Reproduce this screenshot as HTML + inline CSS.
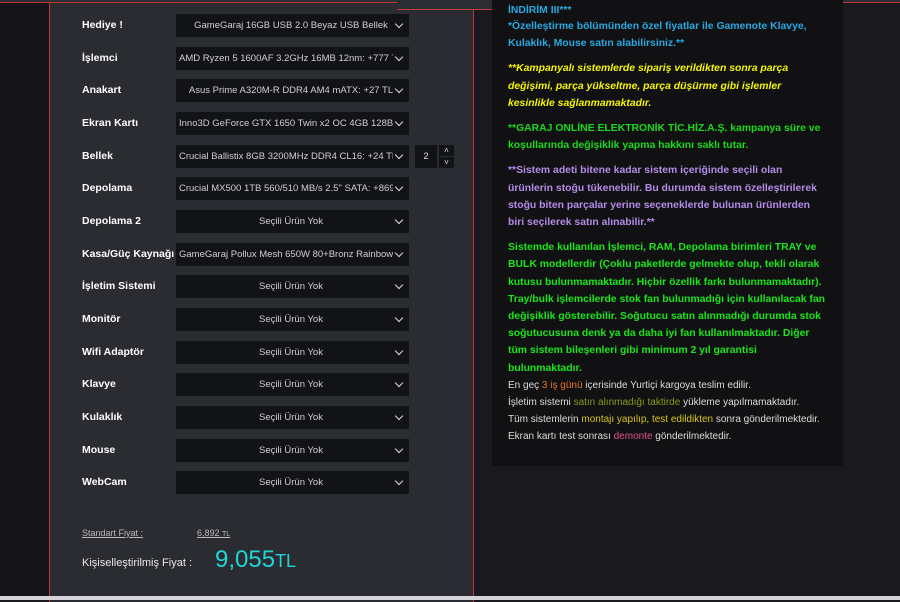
<!DOCTYPE html>
<html><head><meta charset="utf-8"><style>
*{margin:0;padding:0;box-sizing:border-box}
body{width:900px;height:600px;overflow:hidden;background:#1a191e;font-family:"Liberation Sans","DejaVu Sans",sans-serif;position:relative}
.left{position:absolute;left:0;top:0;width:49px;height:596px;background:#161519}
.panel{position:absolute;left:49px;top:2px;width:425px;height:600px;background:#2a2c31;border:1px solid #b83a3a;border-bottom:none}
.tab{position:absolute;left:397px;top:0;width:103px;height:10px;background:#2b2d33;border-bottom:1px solid #c0403c}
.topline{position:absolute;left:0;top:0;width:900px;height:3px;background:#2b2d33;border-bottom:1px solid #b83a3a}
.lbl{position:absolute;left:82px;font-size:10.5px;font-weight:bold;color:#fff;line-height:12px}
.sel{position:absolute;left:176px;width:233px;height:23px;background:#121316;color:#d0d0d0;font-size:9.5px;line-height:23px}
.sel span{position:absolute;left:3px;width:214px;white-space:nowrap;overflow:hidden}
.sel.c span{text-align:center;left:0;width:230px}
.sel:after{content:"";position:absolute;right:7px;top:7px;width:5px;height:5px;border-right:1.5px solid #ddd;border-bottom:1.5px solid #ddd;transform:rotate(45deg)}
.qty{position:absolute;left:415px;top:145px;width:22px;height:23px;background:#121316;color:#ddd;font-size:9.5px;line-height:23px;text-align:center}
.sp{position:absolute;left:439px;width:15px;height:11px;background:#121316;color:#ddd;font-size:8px;text-align:center;line-height:11px}
.info{position:absolute;left:492px;top:0;width:351px;height:466px;background:#111113;padding:4px 0 0 16px;font-size:10.4px;font-weight:bold;line-height:17.2px}
.info .w{width:318px}
.info p{margin-bottom:8px}
.n{font-weight:normal;color:#ddd;margin:0!important;font-size:10px}
.bot{position:absolute;left:0;top:596px;width:900px;height:4px;background:#d6d4da}
</style></head><body>
<div class="left"></div>
<div class="topline"></div>
<div class="panel"></div>
<div class="tab"></div>

<div class="lbl" style="top:19px">Hediye !</div><div class="sel c" style="top:14px"><span>GameGaraj 16GB USB 2.0 Beyaz USB Bellek</span></div>
<div class="lbl" style="top:52px">İşlemci</div><div class="sel" style="top:47px"><span>AMD Ryzen 5 1600AF 3.2GHz 16MB 12nm:  +777 TL</span></div>
<div class="lbl" style="top:84px">Anakart</div><div class="sel c" style="top:79px"><span>Asus Prime A320M-R DDR4 AM4 mATX:  +27 TL</span></div>
<div class="lbl" style="top:117px">Ekran Kartı</div><div class="sel" style="top:112px"><span>Inno3D GeForce GTX 1650 Twin x2 OC 4GB 128Bit</span></div>
<div class="lbl" style="top:150px">Bellek</div><div class="sel" style="top:145px"><span>Crucial Ballistix 8GB 3200MHz DDR4 CL16:  +24 TL</span></div>
<div class="qty">2</div><div class="sp" style="top:145px">˄</div><div class="sp" style="top:157px">˅</div>
<div class="lbl" style="top:182px">Depolama</div><div class="sel" style="top:177px"><span>Crucial MX500 1TB 560/510 MB/s 2.5" SATA:  +869 TL</span></div>
<div class="lbl" style="top:215px">Depolama 2</div><div class="sel c" style="top:210px"><span>Seçili Ürün Yok</span></div>
<div class="lbl" style="top:248px">Kasa/Güç Kaynağı</div><div class="sel" style="top:243px"><span>GameGaraj Pollux Mesh 650W 80+Bronz Rainbow</span></div>
<div class="lbl" style="top:280px">İşletim Sistemi</div><div class="sel c" style="top:275px"><span>Seçili Ürün Yok</span></div>
<div class="lbl" style="top:313px">Monitör</div><div class="sel c" style="top:308px"><span>Seçili Ürün Yok</span></div>
<div class="lbl" style="top:346px">Wifi Adaptör</div><div class="sel c" style="top:341px"><span>Seçili Ürün Yok</span></div>
<div class="lbl" style="top:378px">Klavye</div><div class="sel c" style="top:373px"><span>Seçili Ürün Yok</span></div>
<div class="lbl" style="top:411px">Kulaklık</div><div class="sel c" style="top:406px"><span>Seçili Ürün Yok</span></div>
<div class="lbl" style="top:444px">Mouse</div><div class="sel c" style="top:439px"><span>Seçili Ürün Yok</span></div>
<div class="lbl" style="top:476px">WebCam</div><div class="sel c" style="top:471px"><span>Seçili Ürün Yok</span></div>

<div style="position:absolute;left:82px;top:528px;font-size:9px;color:#bbb;text-decoration:underline">Standart Fiyat :</div>
<div style="position:absolute;left:197px;top:528px;font-size:9px;color:#bbb;text-decoration:underline">6,892 <span style="font-size:7px">TL</span></div>
<div style="position:absolute;left:82px;top:557px;font-size:11px;color:#e8e8e8">Kişiselleştirilmiş Fiyat :</div>
<div style="position:absolute;left:215px;top:546px;font-size:24px;color:#1fd6d6">9,055<span style="font-size:18px">TL</span></div>

<div class="info"><div class="w">
<div style="color:#29a8e0;line-height:14px">İNDİRİM III***</div>
<p style="color:#29a8e0">*Özelleştirme bölümünden özel fiyatlar ile Gamenote Klavye, Kulaklık, Mouse satın alabilirsiniz.**</p>
<p style="color:#f5f500;font-style:italic">**Kampanyalı sistemlerde sipariş verildikten sonra parça değişimi, parça yükseltme, parça düşürme gibi işlemler kesinlikle sağlanmamaktadır.</p>
<p style="color:#19d919">**GARAJ ONLİNE ELEKTRONİK TİC.HİZ.A.Ş. kampanya süre ve koşullarında değişiklik yapma hakkını saklı tutar.</p>
<p style="color:#b58be8">**Sistem adeti bitene kadar sistem içeriğinde seçili olan ürünlerin stoğu tükenebilir. Bu durumda sistem özelleştirilerek stoğu biten parçalar yerine seçeneklerde bulunan ürünlerden biri seçilerek satın alınabilir.**</p>
<p style="color:#19e619;margin:0">Sistemde kullanılan İşlemci, RAM, Depolama birimleri TRAY ve BULK modellerdir (Çoklu paketlerde gelmekte olup, tekli olarak kutusu bulunmamaktadır. Hiçbir özellik farkı bulunmamaktadır). Tray/bulk işlemcilerde stok fan bulunmadığı için kullanılacak fan değişiklik gösterebilir. Soğutucu satın alınmadığı durumda stok soğutucusuna denk ya da daha iyi fan kullanılmaktadır. Diğer tüm sistem bileşenleri gibi minimum 2 yıl garantisi bulunmaktadır.</p>
<p class="n">En geç <span style="color:#e8741c">3 iş günü</span> içerisinde Yurtiçi kargoya teslim edilir.</p>
<p class="n">İşletim sistemi <span style="color:#8a9a1a">satın alınmadığı taktirde</span> yükleme yapılmamaktadır.</p>
<p class="n">Tüm sistemlerin <span style="color:#d8c41a">montajı yapılıp, test edildikten</span> sonra gönderilmektedir.</p>
<p class="n">Ekran kartı test sonrası <span style="color:#e0508a">demonte</span> gönderilmektedir.</p>
</div></div>
<div class="bot"></div>
</body></html>
